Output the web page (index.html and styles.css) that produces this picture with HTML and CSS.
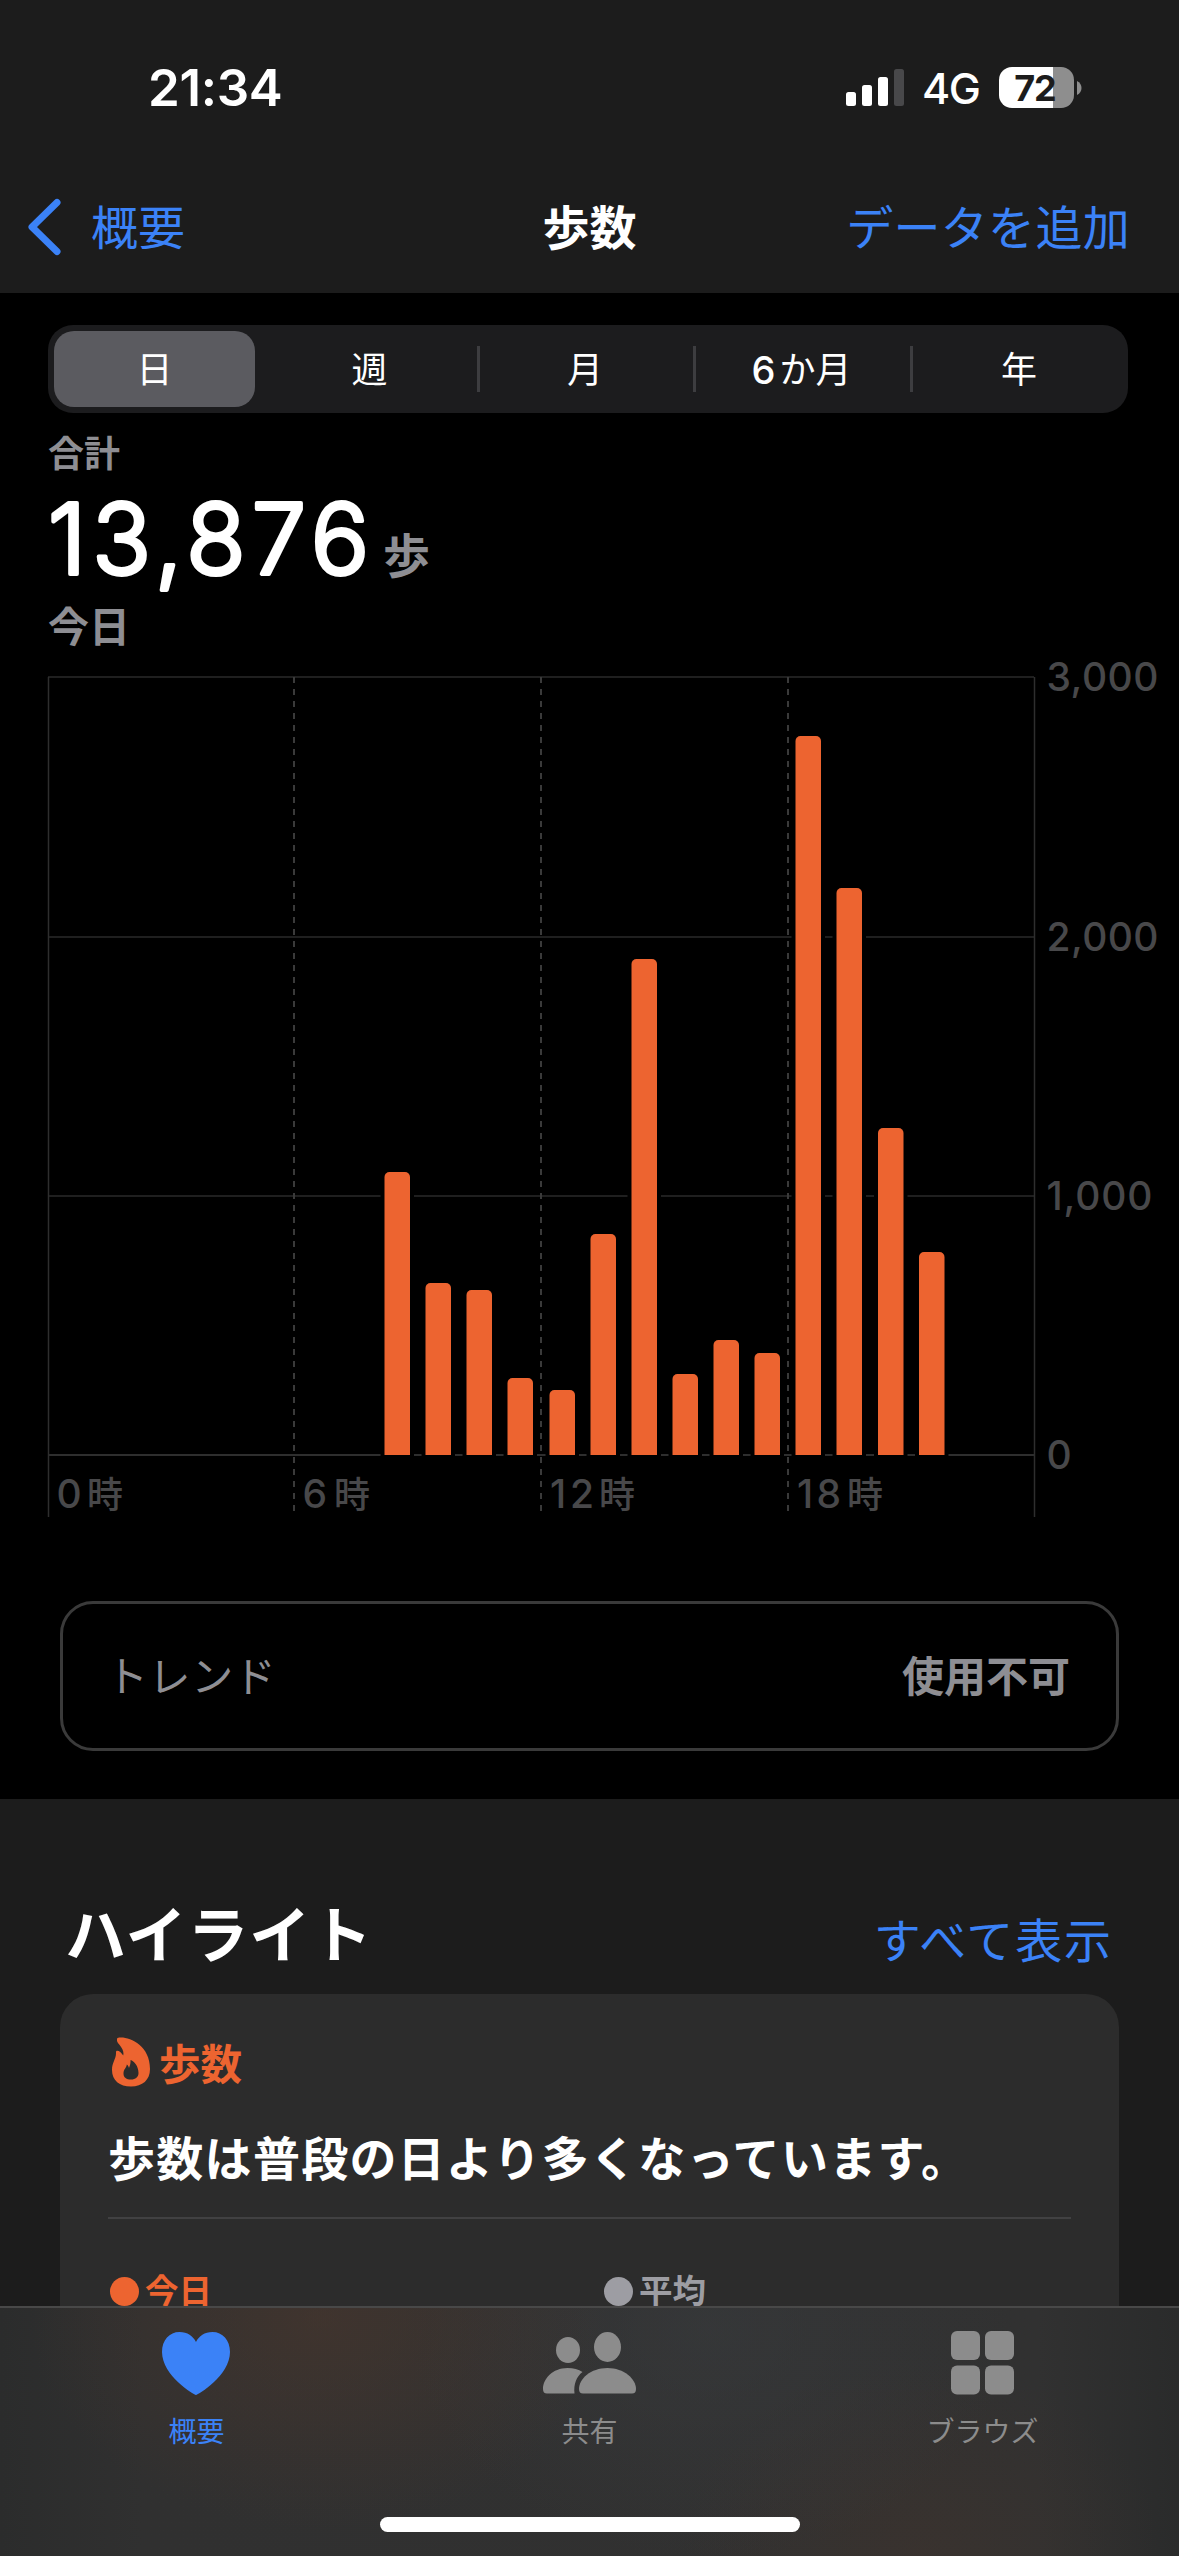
FILE: index.html
```html
<!DOCTYPE html>
<html lang="ja">
<head>
<meta charset="utf-8">
<title>歩数</title>
<link rel="stylesheet" href="styles.css">
</head>
<body>
<div class="screen">
  <header class="top">
    <div class="status">
      <span class="clock">21:34</span>
      <div class="indicators">
        <svg class="signal" width="58" height="37" viewBox="0 0 58 37">
          <rect x="0" y="23" width="10" height="14" rx="2.5" fill="#fff"/>
          <rect x="16" y="16" width="10" height="21" rx="2.5" fill="#fff"/>
          <rect x="32" y="8" width="10" height="29" rx="2.5" fill="#fff"/>
          <rect x="48" y="0" width="10" height="37" rx="2.5" fill="#48484a"/>
        </svg>
        <span class="network">4G</span>
        <div class="battery"><span class="battery-level">72</span></div>
        <svg class="battery-tip" width="5" height="14" viewBox="0 0 5 14"><path d="M0 0C6 3 6 11 0 14Z" fill="#8e8e8e"/></svg>
      </div>
    </div>
    <nav class="nav">
      <a class="back">
        <svg width="34" height="58" viewBox="0 0 34 58"><path d="M30 4.500L5 29L30 53.500" fill="none" stroke="#3b82f7" stroke-width="7" stroke-linecap="round" stroke-linejoin="round"/></svg>
        <span>概要</span>
      </a>
      <h1 class="title">歩数</h1>
      <a class="add">データを追加</a>
    </nav>
  </header>

  <main>
    <div class="segments">
      <span class="segment selected">日</span>
      <span class="segment">週</span>
      <span class="segment divided">月</span>
      <span class="segment divided"><i class="digit">6</i>か月</span>
      <span class="segment divided">年</span>
    </div>

    <section class="summary">
      <p class="caption">合計</p>
      <p class="total">
        <svg class="total-value" width="324" height="115" viewBox="0 0 324 115"><text x="0" y="89.500" textLength="321">13,876</text></svg>
        <span class="unit">歩</span>
      </p>
      <p class="period">今日</p>
    </section>

    <svg class="chart" width="1179" height="880" viewBox="0 650 1179 880">
      <g class="grid-h">
        <path d="M48 677H1034M48 937H1034M48 1196H1034"/>
        <path class="baseline" d="M48 1455H1034"/>
      </g>
      <path class="edge" d="M48.5 677V1517M1034.5 677V1517"/>
      <path class="dash" d="M294 677V1517M541 677V1517M788 677V1517"/>
      <g class="bars">
        <path d="M384.5 1455V1177a5 5 0 0 1 5-5h15.5a5 5 0 0 1 5 5V1455z"/>
        <path d="M425.5 1455V1288a5 5 0 0 1 5-5h15.5a5 5 0 0 1 5 5V1455z"/>
        <path d="M466.5 1455V1295a5 5 0 0 1 5-5h15.5a5 5 0 0 1 5 5V1455z"/>
        <path d="M507.5 1455V1383a5 5 0 0 1 5-5h15.5a5 5 0 0 1 5 5V1455z"/>
        <path d="M549.5 1455V1395a5 5 0 0 1 5-5h15.5a5 5 0 0 1 5 5V1455z"/>
        <path d="M590.5 1455V1239a5 5 0 0 1 5-5h15.5a5 5 0 0 1 5 5V1455z"/>
        <path d="M631.5 1455V964a5 5 0 0 1 5-5h15.5a5 5 0 0 1 5 5V1455z"/>
        <path d="M672.5 1455V1379a5 5 0 0 1 5-5h15.5a5 5 0 0 1 5 5V1455z"/>
        <path d="M713.5 1455V1345a5 5 0 0 1 5-5h15.5a5 5 0 0 1 5 5V1455z"/>
        <path d="M754.5 1455V1358a5 5 0 0 1 5-5h15.5a5 5 0 0 1 5 5V1455z"/>
        <path d="M795.5 1455V741a5 5 0 0 1 5-5h15.5a5 5 0 0 1 5 5V1455z"/>
        <path d="M836.5 1455V893a5 5 0 0 1 5-5h15.5a5 5 0 0 1 5 5V1455z"/>
        <path d="M878 1455V1133a5 5 0 0 1 5-5h15.5a5 5 0 0 1 5 5V1455z"/>
        <path d="M919 1455V1257a5 5 0 0 1 5-5h15.5a5 5 0 0 1 5 5V1455z"/>
      </g>
      <g class="axis">
        <text x="1046.500" y="691" textLength="112">3,000</text>
        <text x="1046.500" y="951" textLength="112">2,000</text>
        <text x="1046.500" y="1210" textLength="106">1,000</text>
        <text x="1046.500" y="1469">0</text>
        <text x="56.500" y="1508">0</text><text class="hour" x="87" y="1508">時</text>
        <text x="302.500" y="1508">6</text><text class="hour" x="334" y="1508">時</text>
        <text x="550" y="1508" textLength="44">12</text><text class="hour" x="599" y="1508">時</text>
        <text x="797" y="1508" textLength="44">18</text><text class="hour" x="847" y="1508">時</text>
      </g>
    </svg>

    <div class="trend"><span class="trend-name">トレンド</span><strong>使用不可</strong></div>

    <section class="highlights">
      <div class="section-head"><h2>ハイライト</h2><a>すべて表示</a></div>
      <article class="card">
        <div class="card-type">
          <svg width="38" height="50" viewBox="0 0 38 50"><path fill-rule="evenodd" d="M5.500 1C14-1.500 38 6 38 32C38 43 30.500 49.500 19 49.500C7.500 49.500 0 43.500 0 33C0 25 4.500 22 4 15C4.200 12 9 14.500 11.200 18.500C13 11 5 7 5 3.500C5 2 5.100 1.300 5.500 1ZM18.500 23C18.800 26 18 28.500 17 31C16.500 29 15.700 28 14.800 27.500C14.500 31 11.500 32 11.500 36.500C11.500 40.500 14.500 42.500 19 42.500C23.500 42.500 26.500 40 26.500 36C26.500 29 22 24 18.500 23Z" fill="#ed6430"/></svg>
          <span>歩数</span>
        </div>
        <p class="message">歩数は普段の日より多くなっています。</p>
        <div class="legend">
          <span class="legend-item today">今日</span>
          <span class="legend-item average">平均</span>
        </div>
      </article>
    </section>
  </main>

  <footer class="tabs">
    <a class="tab active">
      <svg width="94" height="64" viewBox="0 0 94 64"><path d="M46 64C44 64 12 44.500 12 21C12 9 19.500 1 29.500 1C37.500 1 43 5 46 11C49 5 54.500 1 62.500 1C72.500 1 80 9 80 21C80 44.500 48 64 46 64Z"/></svg>
      <span>概要</span>
    </a>
    <a class="tab">
      <svg width="94" height="64" viewBox="0 0 94 64"><ellipse cx="25" cy="19" rx="12" ry="13"/><path d="M4 62.500Q0 62.500 0 58C0 48 9.500 37 24.500 37C30.500 37 35.500 38.500 39.500 41C33.500 45.500 30.500 53 31.500 62.500Z"/><ellipse cx="64.500" cy="16" rx="13.500" ry="15"/><path d="M40 62.500Q36 62.500 36 58C36 48 47.500 37 64.500 37C81 37 93 48 93 58Q93 62.500 89 62.500Z"/></svg>
      <span>共有</span>
    </a>
    <a class="tab">
      <svg width="94" height="64" viewBox="0 0 94 64"><rect x="15" y="0" width="29" height="29" rx="6"/><rect x="49" y="0" width="29" height="29" rx="6"/><rect x="15" y="34.500" width="29" height="29" rx="6"/><rect x="49" y="34.500" width="29" height="29" rx="6"/></svg>
      <span>ブラウズ</span>
    </a>
    <div class="home"></div>
  </footer>
</div>
</body>
</html>
```
FILE: styles.css
```css
* { box-sizing: border-box; }
body, h1, h2, p { margin: 0; }
body {
  background: #000;
  color: #fff;
  font-family: Inter, "Noto Sans CJK JP", sans-serif;
}
.screen {
  position: relative;
  width: 1179px;
  height: 2556px;
  overflow: hidden;
  background: #000;
}

/* Status bar and navigation */
.top { height: 293px; background: #1c1c1c; }
.status {
  display: flex;
  justify-content: space-between;
  height: 161px;
  padding: 67px 97px 0 148px;
}
.clock { font-size: 51px; line-height: 42px; font-weight: 600; letter-spacing: -0.3px; }
.indicators { display: flex; height: 41px; align-items: center; }
.signal { margin-right: 18px; }
.network { width: 77px; font-size: 43px; line-height: 41px; font-weight: 500; letter-spacing: -1.5px; padding-top: 2px; }
.battery {
  width: 75px;
  height: 41px;
  margin-right: 3px;
  border-radius: 13px;
  background: linear-gradient(90deg, #fff 54px, #8e8e8e 54px);
  color: #1c1c1c;
  font-size: 36px;
  line-height: 42px;
  font-weight: 700;
  text-align: center;
}
.battery-level { letter-spacing: -1px; margin-left: -3px; }
.nav {
  display: grid;
  grid-template-columns: 1fr auto 1fr;
  align-items: center;
  height: 132px;
  padding: 0 49px 0 27px;
  font-size: 47px;
  line-height: 60px;
}
.back { display: flex; align-items: center; gap: 30px; color: #3b82f7; }
.title { font-size: 47px; line-height: 60px; font-weight: 700; margin-left: 22px; }
.add { color: #3b82f7; text-align: right; letter-spacing: 0.3px; }
.back span, .title, .add { padding-top: 1px; }

/* Range selector */
.segments {
  display: grid;
  grid-template-columns: 214px 215px 216px 217px 218px;
  width: 1080px;
  height: 88px;
  margin: 32px 0 0 48px;
  border-radius: 25px;
  background: #1c1c1e;
}
.segment {
  display: flex;
  align-items: center;
  justify-content: center;
  padding-top: 2px;
  font-size: 36px;
  line-height: 50px;
}
.selected { margin: 6px 7px 6px 6px; border-radius: 20px; background: #5b5b60; }
.divided { background: linear-gradient(#3d3d40, #3d3d40) 0 50% / 3px 46px no-repeat; }
.digit { font-size: 38px; font-style: normal; font-weight: 500; margin-right: 4px; }

/* Total */
.summary { height: 264px; padding: 17px 0 0 48px; color: #8e8e93; font-weight: 600; }
.caption { height: 54px; font-size: 36px; line-height: 48px; }
.total { display: flex; align-items: flex-end; height: 115px; }
.total-value { overflow: visible; }
.total-value text {
  font-size: 97px;
  font-weight: 300;
  fill: #fff;
  stroke: #fff;
  stroke-width: 4px;
  stroke-linejoin: round;
}
.unit { font-size: 47px; line-height: 60px; margin: 0 0 13px 11px; font-weight: 600; }
.period { font-size: 41px; line-height: 56px; }

/* Hourly chart */
.chart { display: block; margin-top: -27px; }
.chart path { fill: none; }
.grid-h path { stroke: #1f1f1f; stroke-width: 2; }
.grid-h .baseline { stroke: #2e2e2e; }
.edge { stroke: #2e2e2e; stroke-width: 1.5; }
.dash { stroke: #3a3a3a; stroke-width: 2; stroke-dasharray: 6 6; }
.chart .bars path { fill: #ed6430; stroke: #000; stroke-width: 8; paint-order: stroke; }
.axis text { fill: #48484a; font-size: 39px; font-weight: 500; }
.axis .hour { font-size: 36px; }

/* Trend */
.trend {
  display: flex;
  justify-content: space-between;
  align-items: center;
  width: 1059px;
  height: 150px;
  margin: 71px 0 0 60px;
  padding: 2px 46px 0 43px;
  border: 3px solid #3a3a3a;
  border-radius: 33px;
  color: #8e8e93;
  font-size: 42px;
  line-height: 60px;
}
.trend-name { letter-spacing: 0.6px; }
.trend strong { font-weight: 600; }

/* Highlights */
.highlights { height: 757px; margin-top: 48px; padding: 95px 60px 0; background: #1c1c1c; }
.section-head { display: flex; justify-content: space-between; height: 100px; padding: 0 6px 0 5px; }
.section-head h2 { font-size: 61px; line-height: 84px; letter-spacing: 0.8px; font-weight: 600; }
.section-head a { font-size: 47px; line-height: 93px; letter-spacing: 1.9px; color: #3b82f7; }
.card { height: 600px; padding: 43px 48px 0; border-radius: 33px; background: #2c2c2c; }
.card-type { display: flex; gap: 9px; height: 70px; padding-left: 4px; color: #ed6430; font-size: 41.5px; line-height: 57px; font-weight: 600; }
.message { height: 112px; border-bottom: 2px solid #414142; font-size: 47px; line-height: 103px; letter-spacing: 1.3px; font-weight: 600; white-space: nowrap; }
.legend { display: grid; grid-template-columns: 494px 1fr; padding: 49px 0 0 2px; }
.legend-item { display: flex; align-items: center; gap: 6px; font-size: 33.5px; line-height: 46px; font-weight: 600; }
.legend-item::before { content: ""; width: 29px; height: 29px; border-radius: 50%; background: currentColor; }
.today { color: #ed6430; }
.average { color: #9d9da3; }

/* Tab bar covers the scrolling content */
.tabs {
  position: absolute;
  left: 0;
  right: 0;
  bottom: 0;
  height: 250px;
  display: grid;
  grid-template-columns: repeat(3, 1fr);
  padding-top: 23px;
  border-top: 2px solid #484848;
  background:
    radial-gradient(ellipse 290px 210px at 320px 10px, rgba(76, 55, 44, .55), transparent),
    radial-gradient(ellipse 300px 230px at 710px 20px, rgba(58, 61, 64, .5), transparent),
    radial-gradient(ellipse 240px 190px at 920px 245px, rgba(62, 51, 45, .6), transparent),
    linear-gradient(90deg, #2b2c2c, #303030 12%, #313131 88%, #2a2b2b);
}
.tab { display: flex; flex-direction: column; align-items: center; color: #8c8c8c; font-size: 28px; line-height: 40px; gap: 17px; }
.tab svg { fill: currentColor; }
.active { color: #3b82f7; }
.home { position: absolute; left: 380px; bottom: 24px; width: 420px; height: 15px; border-radius: 8px; background: #fff; }
```
